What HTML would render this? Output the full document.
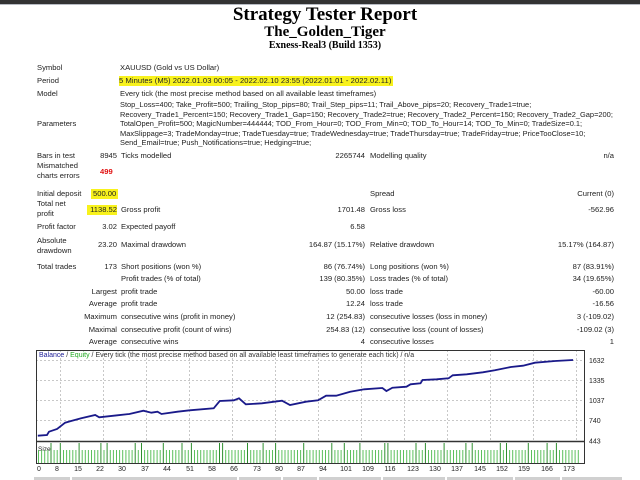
<!DOCTYPE html>
<html><head><meta charset="utf-8"><style>
body{margin:0;width:640px;height:480px;background:#fff;position:relative;overflow:hidden;font-family:"Liberation Sans","DejaVu Sans",sans-serif;font-size:7.6px;color:#222}
.t{position:absolute;line-height:10px;white-space:nowrap}
.r{text-align:right}
.hl{background:#f8f21c}
.h{position:absolute;left:0;width:650px;text-align:center;font-family:"Liberation Serif",serif;font-weight:bold;color:#000}
</style></head><body>
<div style="position:absolute;left:0;top:0;width:640px;height:4px;background:#333"></div>
<div style="position:absolute;left:0;top:4px;width:640px;height:1px;background:#b8bcc4"></div>
<div class="h" style="top:5px;font-size:19px;line-height:20px">Strategy Tester Report</div>
<div class="h" style="top:24px;font-size:15px;line-height:16px">The_Golden_Tiger</div>
<div class="h" style="top:40px;font-size:10px;line-height:11px">Exness-Real3 (Build 1353)</div>

<div class="t" style="left:37px;top:63px">Symbol</div>
<div class="t" style="left:120px;top:63px">XAUUSD (Gold vs US Dollar)</div>
<div class="t" style="left:37px;top:76px">Period</div>
<div class="t hl" style="left:119px;top:76px;padding-right:2px;letter-spacing:0.07px">5 Minutes (M5) 2022.01.03 00:05 - 2022.02.10 23:55 (2022.01.01 - 2022.02.11)</div>
<div class="t" style="left:37px;top:89px">Model</div>
<div class="t" style="left:120px;top:89px">Every tick (the most precise method based on all available least timeframes)</div>
<div class="t" style="left:37px;top:119px">Parameters</div>
<div class="t" style="left:120px;top:100px;line-height:9.6px;font-size:7.45px">Stop_Loss=400; Take_Profit=500; Trailing_Stop_pips=80; Trail_Step_pips=11; Trail_Above_pips=20; Recovery_Trade1=true;<br>Recovery_Trade1_Percent=150; Recovery_Trade1_Gap=150; Recovery_Trade2=true; Recovery_Trade2_Percent=150; Recovery_Trade2_Gap=200;<br>TotalOpen_Profit=500; MagicNumber=444444; TOD_From_Hour=0; TOD_From_Min=0; TOD_To_Hour=14; TOD_To_Min=0; TradeSize=0.1;<br>MaxSlippage=3; TradeMonday=true; TradeTuesday=true; TradeWednesday=true; TradeThursday=true; TradeFriday=true; PriceTooClose=10;<br>Send_Email=true; Push_Notifications=true; Hedging=true;</div>

<div class="t" style="left:37px;top:151px">Bars in test</div>
<div class="t r" style="left:80px;width:37px;top:151px">8945</div>
<div class="t" style="left:121px;top:151px">Ticks modelled</div>
<div class="t r" style="left:300px;width:65px;top:151px">2265744</div>
<div class="t" style="left:370px;top:151px">Modelling quality</div>
<div class="t r" style="left:560px;width:54px;top:151px">n/a</div>
<div class="t" style="left:37px;top:161px;line-height:9.5px">Mismatched<br>charts errors</div>
<div class="t" style="left:100px;top:167px;color:#e01010;font-weight:bold">499</div>

<div class="t" style="left:37px;top:189px">Initial deposit</div>
<div class="t hl" style="left:91px;top:189px;padding:0 2px">500.00</div>
<div class="t" style="left:370px;top:189px">Spread</div>
<div class="t r" style="left:540px;width:74px;top:189px">Current (0)</div>
<div class="t" style="left:37px;top:199px;line-height:9.5px">Total net<br>profit</div>
<div class="t hl" style="left:87px;top:205px;width:30px;text-align:right">1138.52</div>
<div class="t" style="left:121px;top:205px">Gross profit</div>
<div class="t r" style="left:300px;width:65px;top:205px">1701.48</div>
<div class="t" style="left:370px;top:205px">Gross loss</div>
<div class="t r" style="left:540px;width:74px;top:205px">-562.96</div>
<div class="t" style="left:37px;top:222px">Profit factor</div>
<div class="t r" style="left:80px;width:37px;top:222px">3.02</div>
<div class="t" style="left:121px;top:222px">Expected payoff</div>
<div class="t r" style="left:300px;width:65px;top:222px">6.58</div>
<div class="t" style="left:37px;top:236px;line-height:9.5px">Absolute<br>drawdown</div>
<div class="t r" style="left:80px;width:37px;top:240px">23.20</div>
<div class="t" style="left:121px;top:240px">Maximal drawdown</div>
<div class="t r" style="left:280px;width:85px;top:240px">164.87 (15.17%)</div>
<div class="t" style="left:370px;top:240px">Relative drawdown</div>
<div class="t r" style="left:520px;width:94px;top:240px">15.17% (164.87)</div>

<div class="t" style="left:37px;top:262px">Total trades</div>
<div class="t r" style="left:80px;width:37px;top:262px">173</div>
<div class="t" style="left:121px;top:262px">Short positions (won %)</div>
<div class="t r" style="left:280px;width:85px;top:262px">86 (76.74%)</div>
<div class="t" style="left:370px;top:262px">Long positions (won %)</div>
<div class="t r" style="left:520px;width:94px;top:262px">87 (83.91%)</div>

<div class="t" style="left:121px;top:274px">Profit trades (% of total)</div>
<div class="t r" style="left:280px;width:85px;top:274px">139 (80.35%)</div>
<div class="t" style="left:370px;top:274px">Loss trades (% of total)</div>
<div class="t r" style="left:520px;width:94px;top:274px">34 (19.65%)</div>

<div class="t r" style="left:60px;width:57px;top:287px">Largest</div>
<div class="t" style="left:121px;top:287px">profit trade</div>
<div class="t r" style="left:280px;width:85px;top:287px">50.00</div>
<div class="t" style="left:370px;top:287px">loss trade</div>
<div class="t r" style="left:520px;width:94px;top:287px">-60.00</div>

<div class="t r" style="left:60px;width:57px;top:299px">Average</div>
<div class="t" style="left:121px;top:299px">profit trade</div>
<div class="t r" style="left:280px;width:85px;top:299px">12.24</div>
<div class="t" style="left:370px;top:299px">loss trade</div>
<div class="t r" style="left:520px;width:94px;top:299px">-16.56</div>

<div class="t r" style="left:60px;width:57px;top:312px">Maximum</div>
<div class="t" style="left:121px;top:312px">consecutive wins (profit in money)</div>
<div class="t r" style="left:280px;width:85px;top:312px">12 (254.83)</div>
<div class="t" style="left:370px;top:312px">consecutive losses (loss in money)</div>
<div class="t r" style="left:520px;width:94px;top:312px">3 (-109.02)</div>

<div class="t r" style="left:60px;width:57px;top:325px">Maximal</div>
<div class="t" style="left:121px;top:325px">consecutive profit (count of wins)</div>
<div class="t r" style="left:280px;width:85px;top:325px">254.83 (12)</div>
<div class="t" style="left:370px;top:325px">consecutive loss (count of losses)</div>
<div class="t r" style="left:520px;width:94px;top:325px">-109.02 (3)</div>

<div class="t r" style="left:60px;width:57px;top:337px">Average</div>
<div class="t" style="left:121px;top:337px">consecutive wins</div>
<div class="t r" style="left:280px;width:85px;top:337px">4</div>
<div class="t" style="left:370px;top:337px">consecutive losses</div>
<div class="t r" style="left:520px;width:94px;top:337px">1</div>

<svg style="position:absolute;left:0;top:0" width="640" height="480">
<g stroke="#c8c8c8" stroke-dasharray="2,2" stroke-width="1">
<line x1="36" y1="360.5" x2="585" y2="360.5"/><line x1="36" y1="380.5" x2="585" y2="380.5"/><line x1="36" y1="400.5" x2="585" y2="400.5"/><line x1="36" y1="420.5" x2="585" y2="420.5"/>
<line x1="60.5" y1="350" x2="60.5" y2="441"/><line x1="103.5" y1="350" x2="103.5" y2="441"/><line x1="146.5" y1="350" x2="146.5" y2="441"/><line x1="189.5" y1="350" x2="189.5" y2="441"/><line x1="232.5" y1="350" x2="232.5" y2="441"/><line x1="275.5" y1="350" x2="275.5" y2="441"/><line x1="318.5" y1="350" x2="318.5" y2="441"/><line x1="361.5" y1="350" x2="361.5" y2="441"/><line x1="404.5" y1="350" x2="404.5" y2="441"/><line x1="447.5" y1="350" x2="447.5" y2="441"/><line x1="490.5" y1="350" x2="490.5" y2="441"/><line x1="533.5" y1="350" x2="533.5" y2="441"/><line x1="576.5" y1="350" x2="576.5" y2="441"/>
</g>
<rect x="36.5" y="350.5" width="548" height="113" fill="none" stroke="#333" stroke-width="1"/>
<line x1="36" y1="441.5" x2="585" y2="441.5" stroke="#333" stroke-width="1.5"/>
<polyline fill="none" stroke="#1a1a8a" stroke-width="1.8" points="37.8,435.7 47,435 49,431.7 57.1,429 65.1,422.7 71.1,421 81.2,418.3 95.2,415 99.2,417.3 117.3,415.3 129.4,414 143.4,410.7 151.4,412.7 157.5,411.7 161.5,414 177.6,411.7 189.6,410.3 213.7,408.3 219.7,401 233.8,400.3 239,398.3 245.8,404.3 261.9,403.3 282,400.7 290,405 306.1,401.7 318.1,400.3 326.1,395.7 336.2,395.7 350.2,391.7 364.3,389.3 382.4,388 386.4,391 392.4,387.7 406.5,386.7 410.5,384.3 420.5,383.3 422.5,380 436.6,379.3 448.6,378.3 452.7,375.3 466.7,374.3 482.8,372.3 494.8,370.3 510.9,367 523,365.7 535,362.7 555.1,361 573.1,360"/>
<g font-family="Liberation Sans, sans-serif" font-size="7" fill="#222">
<text x="39" y="357" fill="#333"><tspan fill="#22229a">Balance</tspan> / <tspan fill="#2a2">Equity</tspan> / Every tick (the most precise method based on all available least timeframes to generate each tick) / n/a</text>
<text x="589" y="363">1632</text><text x="589" y="383">1335</text><text x="589" y="403">1037</text><text x="589" y="423">740</text><text x="589" y="443.5">443</text>
<text x="38" y="451" font-size="6.5">Size</text>
</g>
<g id="bars" stroke-width="1"></g>
<g font-family="Liberation Sans, sans-serif" font-size="7" fill="#222" text-anchor="middle">
<text x="39" y="471">0</text><text x="57" y="471">8</text><text x="78" y="471">15</text><text x="100" y="471">22</text><text x="122" y="471">30</text><text x="145" y="471">37</text><text x="167" y="471">44</text><text x="190" y="471">51</text><text x="212" y="471">58</text><text x="234" y="471">66</text><text x="257" y="471">73</text><text x="279" y="471">80</text><text x="301" y="471">87</text><text x="323" y="471">94</text><text x="346" y="471">101</text><text x="368" y="471">109</text><text x="390" y="471">116</text><text x="413" y="471">123</text><text x="435" y="471">130</text><text x="457" y="471">137</text><text x="480" y="471">145</text><text x="502" y="471">152</text><text x="524" y="471">159</text><text x="547" y="471">166</text><text x="569" y="471">173</text>
</g>
<rect x="34" y="477" width="36" height="3" fill="#d0d0d0"/><rect x="72" y="477" width="165" height="3" fill="#d0d0d0"/><rect x="239" y="477" width="42" height="3" fill="#d0d0d0"/><rect x="283" y="477" width="34" height="3" fill="#d0d0d0"/><rect x="319" y="477" width="62" height="3" fill="#d0d0d0"/><rect x="383" y="477" width="62" height="3" fill="#d0d0d0"/><rect x="447" y="477" width="66" height="3" fill="#d0d0d0"/><rect x="515" y="477" width="45" height="3" fill="#d0d0d0"/><rect x="562" y="477" width="60" height="3" fill="#d0d0d0"/>
</svg>
<script>
var g=document.getElementById('bars'),s='';
for(var i=0;i<174;i++){var x=38.5+i*3.12;var tall=(i%9==4)||(i%13==7);var y=tall?443:450;s+='<line x1="'+x.toFixed(1)+'" y1="'+y+'" x2="'+x.toFixed(1)+'" y2="463" stroke="'+(tall?'#2f8f2f':'#5cc05c')+'"/>';}
g.innerHTML=s;
</script>
</body></html>
